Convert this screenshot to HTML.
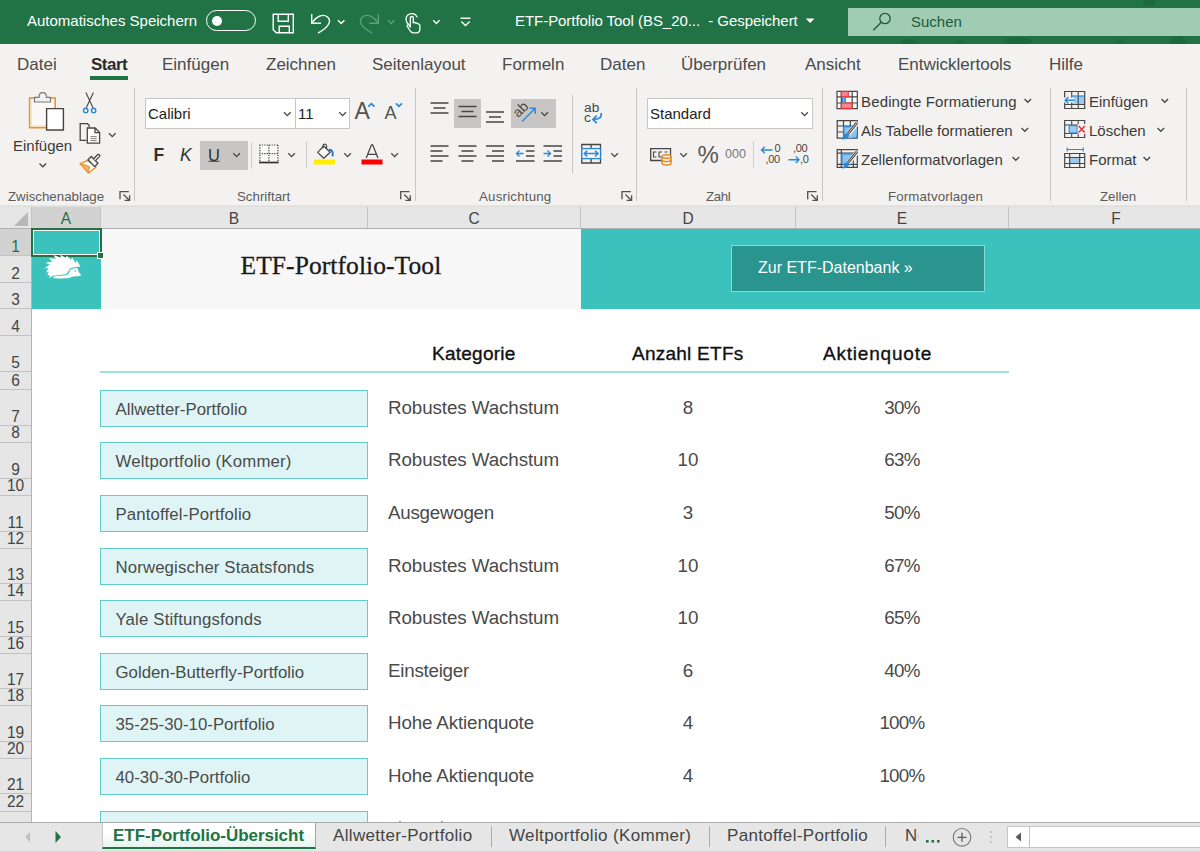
<!DOCTYPE html>
<html><head><meta charset="utf-8">
<style>
*{box-sizing:border-box;margin:0;padding:0}
html,body{width:1200px;height:852px;overflow:hidden;background:#fff;font-family:"Liberation Sans",sans-serif;}
.abs,.abs *{position:absolute}
#root{position:relative;width:1200px;height:852px;overflow:hidden}
#root div,#root span,#root svg{position:absolute;white-space:nowrap}
.t{line-height:1}
/* title bar */
#tb{left:0;top:0;width:1200px;height:44px;background:#217346}
#tb .w{color:#fff;font-size:15px;line-height:20px}
/* ribbon */
#rb{left:0;top:44px;width:1200px;height:162px;background:#f3f2f1}
.tab{font-size:17px;color:#4a4a4a;line-height:20px;top:11px}
.gl{font-size:13.300px;color:#5c5a58;line-height:16px;top:145px}
.sep{width:1px;background:#c8c6c4;top:44px;height:113px}
.rt{font-size:15px;color:#3b3a39;line-height:18px}
.combo{background:#fff;border:1px solid #c8c6c4;height:31px;top:54px}
.hl{background:#c8c6c4}
/* grid */
.ch{top:207px;height:21px;background:#e6e6e6;border-right:1px solid #c4c4c4;font-size:15.500px;color:#444;text-align:center;line-height:23px}
.ch b{font-weight:normal;display:block;position:static!important;transform:scaleY(1.08);transform-origin:50% 70%}
.rh{left:0;width:31px;background:#e6e6e6;border-bottom:1px solid #c4c4c4;font-size:15.500px;color:#444;text-align:center}
.rn{left:0;width:31px;text-align:center;font-size:15.500px;color:#444;line-height:17px;transform:scaleY(1.1);transform-origin:50% 82%}
.rh span{left:0;width:31px;bottom:1px;line-height:17px;text-align:center}
.box{left:100px;width:268px;height:37px;background:#dff5f5;border:1px solid #62cdc8}
.pt{left:115.5px;font-size:16.8px;color:#4a4a4a;line-height:20px;letter-spacing:-0.05px}
.ct{left:388px;font-size:18.8px;color:#4a4a4a;line-height:22px;letter-spacing:-0.12px}
.nt{left:638px;width:100px;text-align:center;font-size:18.8px;color:#4a4a4a;line-height:22px}
.qt{left:852px;width:100px;text-align:center;font-size:18.8px;color:#4a4a4a;line-height:22px;letter-spacing:-.7px}
.hd{font-size:19px;font-weight:normal;color:#111;-webkit-text-stroke:0.35px #111;line-height:22px;top:343px;letter-spacing:0.25px}
/* sheet tabs */
#st{left:0;top:822px;width:1200px;height:30px;background:#e6e6e6;border-top:1px solid #ababab}
.stt{font-size:17px;color:#444;line-height:20px;top:3px}
</style></head><body>
<div id="root">

<!-- TITLE BAR -->
<div id="tb">
  <span class="w" style="left:27px;top:11px">Automatisches Speichern</span>
  <div style="left:206px;top:10px;width:50px;height:21px;border:1px solid #fff;border-radius:11px"></div>
  <div style="left:212px;top:16px;width:10px;height:10px;border-radius:5px;background:#fff"></div>
    <span class="w" style="left:515px;top:11px;letter-spacing:-.05px">ETF-Portfolio Tool (BS_20...&nbsp; - Gespeichert</span>
<svg style="left:0;top:0" width="1200" height="44" viewBox="0 0 1200 44"><g fill="#1d683f">
<circle cx="1149" cy="1" r="6"/><ellipse cx="1018" cy="41" rx="14" ry="4"/><path d="M1114 44 L1120 38.500 L1126 44 Z"/><circle cx="1178" cy="44" r="8.500"/><ellipse cx="909" cy="42" rx="8" ry="3"/><circle cx="960" cy="44" r="3"/></g></svg>
  <div style="left:848px;top:8px;width:352px;height:28px;background:#a0ccb4"></div>
  <span style="left:911px;top:12px;font-size:15px;line-height:20px;color:#1d5a38">Suchen</span>
<!--TBICONS-->
<svg style="left:0;top:0" width="1200" height="44" viewBox="0 0 1200 44" fill="none" stroke="#fff" stroke-width="1.4" stroke-linejoin="miter">
  <!-- save -->
  <path d="M273.2 14.2 H293.3 V32.8 H276.2 L273.2 29.8 Z"/>
  <path d="M278.2 14.2 V21.3 H288.3 V14.2"/>
  <path d="M279.2 32.8 V26.3 H289.3 V32.8"/>
  <!-- undo -->
  <path d="M311.7 14 V23.3 H321" />
  <path d="M312 23 C316 16.5 323 13.2 327.5 17 C332 21 329 27 318 33.2" />
  <path d="M338 20.3 L341.2 23.5 L344.4 20.3" />
  <!-- redo dim -->
  <g stroke="#5c9f78">
  <path d="M378.3 14 V23.3 H369" />
  <path d="M378 23 C374 16.5 367 13.2 362.5 17 C358 21 361 27 372 33.2" />
  <path d="M388 20.3 L391.2 23.5 L394.4 20.3" />
  </g>
  <!-- touch -->
  <g stroke-width="1.3">
  <path d="M408.6 24.3 C405.6 22 405 17.5 407.8 15 C410.6 12.6 415.6 13.3 417.2 17.2" />
  <path d="M410.3 27.5 V18 C410.3 16 413.3 16 413.3 18 V23.5 C413.3 22 415.8 22 415.8 23.8 C415.8 22.6 418 22.7 418 24.5 C418 23.6 419.9 23.8 419.9 25.5 V29 C419.9 31.5 418.5 32.8 416.5 32.8 H413.5 C411.5 32.8 410.5 31.8 409.5 30 L407.3 26.4 C406.6 25 408.6 24 409.5 25.5 Z" />
  </g>
  <path d="M433.2 20.3 L436.4 23.5 L439.6 20.3" />
  <!-- customize -->
  <path d="M460.5 18.2 H470.5" />
  <path d="M461.3 21.5 L465.5 25.5 L469.7 21.5" />
  <!-- title caret -->
  <path d="M805.700 18.500 H814.500 L810.100 23 Z" fill="#fff" stroke="none"/>
  <!-- search -->
  <g stroke="#1d5a38" stroke-width="1.3">
  <circle cx="885" cy="18.5" r="5.2"/>
  <path d="M881.3 22.3 L873.3 30.2"/>
  </g>
</svg>
<!--/TBICONS-->

</div>

<!-- RIBBON -->
<div id="rb">
  <span class="tab" style="left:17px">Datei</span>
  <span class="tab" style="left:91px;font-weight:bold;color:#2b2b2b;letter-spacing:-.5px">Start</span>
  <div style="left:90px;top:32px;width:38px;height:4px;background:#217346"></div>
  <span class="tab" style="left:162px">Einfügen</span>
  <span class="tab" style="left:266px">Zeichnen</span>
  <span class="tab" style="left:372px">Seitenlayout</span>
  <span class="tab" style="left:502px">Formeln</span>
  <span class="tab" style="left:600px">Daten</span>
  <span class="tab" style="left:681px">Überprüfen</span>
  <span class="tab" style="left:805px">Ansicht</span>
  <span class="tab" style="left:898px">Entwicklertools</span>
  <span class="tab" style="left:1049px">Hilfe</span>

  <div class="sep" style="left:134px"></div>
  <div class="sep" style="left:415px"></div>
  <div class="sep" style="left:636px"></div>
  <div class="sep" style="left:822px"></div>
  <div class="sep" style="left:1050px"></div>
  <div class="sep" style="left:1186px"></div>
  <div class="sep" style="left:572px;top:51px;height:78px"></div>

  <span class="gl" style="left:8px">Zwischenablage</span>
  <span class="gl" style="left:237px">Schriftart</span>
  <span class="gl" style="left:479px;letter-spacing:.2px">Ausrichtung</span>
  <span class="gl" style="left:706px;letter-spacing:-.4px">Zahl</span>
  <span class="gl" style="left:888px;letter-spacing:.13px">Formatvorlagen</span>
  <span class="gl" style="left:1100px">Zellen</span>

  <!-- clipboard -->
  <span class="rt" style="left:13px;top:93px">Einfügen</span>
  <!-- font -->
  <div class="combo" style="left:145px;width:151px"></div>
  <div class="combo" style="left:295px;width:55px"></div>
  <span class="rt" style="left:148px;top:61px;color:#222">Calibri</span>
  <span class="rt" style="left:298px;top:61px;color:#222">11</span>
  <div class="hl" style="left:200px;top:96.500px;width:48px;height:29.500px"></div>
  <div class="hl" style="left:454px;top:55px;width:27px;height:29px"></div>
  <div class="hl" style="left:511px;top:55px;width:45px;height:29px"></div>
  <!-- number -->
  <div class="combo" style="left:647px;width:166px"></div>
  <span class="rt" style="left:650px;top:61px;color:#222">Standard</span>
  <!-- styles -->
  <span class="rt" style="left:861px;top:49px;letter-spacing:.15px">Bedingte Formatierung</span>
  <span class="rt" style="left:861px;top:78px;letter-spacing:-.03px">Als Tabelle formatieren</span>
  <span class="rt" style="left:861px;top:107px;letter-spacing:.05px">Zellenformatvorlagen</span>
  <!-- cells -->
  <span class="rt" style="left:1089px;top:49px">Einfügen</span>
  <span class="rt" style="left:1089px;top:78px">Löschen</span>
  <span class="rt" style="left:1089px;top:107px">Format</span>
  <!--RBICONS-->
<svg style="left:0;top:-44px" width="1200" height="206" viewBox="0 0 1200 206" fill="none" stroke="#484644" stroke-width="1.2">
<defs>
  <path id="cv" d="M0 0 L3.3 3.3 L6.6 0" fill="none" stroke="#484644" stroke-width="1.3"/>
  <g id="dl" stroke="#55534f" stroke-width="1.350" fill="none"><path d="M-0.300 9 V1.300 H8.500"/><path d="M3.200 4.200 L9 10 M9.300 5 V10 H4.300"/></g>
</defs>
<!-- ===== clipboard ===== -->
<path d="M29.600 98 H55.200 V127.600 H29.600 Z" fill="#faf9f8" stroke="#e8912d" stroke-width="1.600"/>
<path d="M31.200 99.500 V126 H46" fill="none" stroke="#fbe0b4" stroke-width="1.400"/>
<path d="M34.500 102 V97.300 H39 C39 91 46.500 91 46.500 97.300 H50.500 V102 Z" fill="#f3f2f1" stroke="#7a7876" stroke-width="1.200"/>
<path d="M46.600 108.600 H63.400 V130 H46.600 Z" fill="#fff" stroke="#484644" stroke-width="1.400"/>
<use href="#cv" x="39.500" y="163.500"/>
<!-- scissors -->
<path d="M85.900 92.600 L93 107.800 M93.400 92.600 L86.300 107.800" stroke="#484644" stroke-width="1.100"/>
<circle cx="85.700" cy="110.400" r="2.200" stroke="#2b88d8" stroke-width="1.400"/>
<circle cx="93.600" cy="110.400" r="2.200" stroke="#2b88d8" stroke-width="1.400"/>
<!-- copy -->
<path d="M86.500 140.300 H80.200 V123.700 H87.500 L89.200 125.400 V127.200"  stroke-width="1.300"/>
<path d="M87.300 128 H95.200 L99.600 132.400 V143.200 H87.300 Z M95 128.200 V132.600 H99.400" fill="#fff" stroke-width="1.300"/>
<path d="M90.500 136.600 H96.700 M90.500 138.600 H96.700 M90.500 140.600 H96.700" stroke-width="0.700"/>
<use href="#cv" x="109" y="133.300"/>
<!-- format painter -->
<path d="M80.200 163.600 L87.500 160.500 L96 167 L88.500 173 Z" fill="#fff" stroke="#e8912d" stroke-width="1.400"/>
<path d="M80.200 163.600 L88.500 173 L89.500 166.500 Z" fill="#f5b266" stroke="#e8912d" stroke-width="1"/>
<path d="M88 159.700 L91.300 156.500 L98 163.300 L94.700 166.600 Z" stroke="#484644" stroke-width="1.300" fill="#f3f2f1"/>
<path d="M93.600 158.700 L97.500 154.800 C98.800 153.600 100.600 155.300 99.400 156.600 L95.500 160.600" stroke="#484644" stroke-width="1.300" fill="#f3f2f1"/>
<use href="#dl" x="120.300" y="190.300"/>
<!-- ===== font ===== -->
<use href="#cv" x="284" y="112.3"/>
<use href="#cv" x="339.3" y="112.3"/>
<path d="M368.300 106.700 L371.400 103.600 L374.500 106.700" stroke="#2b88d8" stroke-width="1.700"/>
<path d="M396 103.300 L399 106.300 L402 103.300" stroke="#2b88d8" stroke-width="1.700"/>
<path d="M208.5 161.3 H219.5" stroke-width="1.1"/>
<use href="#cv" x="233.3" y="153.3"/>
<!-- borders -->
<rect x="259.500" y="144.500" width="18.500" height="17" fill="#fafafa" stroke="none"/>
<g stroke="#3b3a39" stroke-width="1.200" stroke-dasharray="1.200 1.270">
<path d="M259.300 145 H278.500 M259.300 153.600 H278.500 M259.900 145 V161.500 M268.900 145 V161.500 M277.900 145 V161.500"/>
</g>
<path d="M259 162.500 H278.700" stroke="#323130" stroke-width="1.700"/>
<path d="M251.500 142 V168.500" stroke="#d2d0ce" stroke-width="1"/>
<use href="#cv" x="288.3" y="153.3"/>
<path d="M306.5 141 V168" stroke="#d2d0ce" stroke-width="1"/>
<!-- fill bucket -->
<path d="M317.700 152.400 L323.700 146 L330.200 152.200 L323.700 158.300 Z" fill="#fafafa" stroke-width="1.250" stroke-linejoin="round"/>
<path d="M323 148.300 V145.800 C323 143.500 326.600 143.500 326.600 146 V148.800" stroke-width="1.100"/>
<path d="M328.800 149.800 C331.800 149.300 333.400 152 332.600 156.300" stroke="#1f72c4" stroke-width="1.900"/>
<rect x="314" y="159.5" width="21" height="5" fill="#ffee00" stroke="none"/>
<use href="#cv" x="344.3" y="153.3"/>
<!-- font color -->
<path d="M366.200 158 L371.500 144.800 H372.700 L378 158 M368 154.300 H376.200" stroke-width="1.300"/>
<rect x="361.5" y="159.5" width="21" height="5" fill="#ff0000" stroke="none"/>
<use href="#cv" x="391.3" y="153.3"/>
<use href="#dl" x="401" y="190.300"/>
<!-- ===== alignment ===== -->
<g stroke-width="1.3">
<path d="M430.5 103 H448.5 M433.5 108 H445.5 M430.5 113 H448.5"/>
<path d="M458.5 106.5 H476.5 M461.5 111.5 H473.5 M458.5 116.5 H476.5"/>
<path d="M486 112 H504 M489 117 H501 M486 122 H504"/>
<path d="M430.5 146 H448.5 M430.5 151 H442.5 M430.5 156 H448.5 M430.5 161 H442.5"/>
<path d="M458.5 146 H476.5 M461.5 151 H473.5 M458.5 156 H476.5 M461.5 161 H473.5"/>
<path d="M486 146 H504 M492 151 H504 M486 156 H504 M492 161 H504"/>
<path d="M516 146 H534.5 M526 151 H534.5 M526 156 H534.5 M516 161 H534.5"/>
<path d="M543.5 146 H562 M553.5 151 H562 M553.5 156 H562 M543.5 161 H562"/>
</g>
<g stroke="#2b88d8" stroke-width="1.4">
<path d="M516.5 153.5 H523.5 M519.5 150.5 L516.5 153.5 L519.5 156.5"/>
<path d="M543.5 153.5 H550.5 M547.5 150.5 L550.5 153.5 L547.5 156.5"/>
<path d="M522 121.5 L535 108.5 M529.5 108.3 H535.2 V114"/>
</g>
<use href="#cv" x="541.3" y="112.3"/>
<!-- wrap arrow -->
<g stroke="#2b88d8" stroke-width="1.700">
<path d="M601.200 113 C601.800 118.200 598.500 119.400 593.300 119.400 M596.700 115.600 L592.900 119.400 L596.700 123.200"/>
</g>
<!-- merge -->
<path d="M581.800 144.500 H600.500 V163 H581.800 Z M591.100 144.500 V148.500 M591.100 158.800 V163" stroke-width="1.300"/>
<rect x="581.800" y="148.600" width="18.700" height="10" fill="#f6f6f6" stroke="#2b88d8" stroke-width="1.300"/>
<g stroke="#2b88d8" stroke-width="1.500"><path d="M584.300 153.600 H598 M587.200 150.700 L584.300 153.600 L587.200 156.500 M595.100 150.700 L598 153.600 L595.100 156.500"/></g>
<use href="#cv" x="611.3" y="153.3"/>
<use href="#dl" x="622.300" y="190.300"/>
<!-- ===== number ===== -->
<use href="#cv" x="801.3" y="112.3"/>
<path d="M650.7 148.7 H670.5 V160.5 H650.7 Z" stroke-width="1.3"/>
<path d="M656.5 152 H653.5 V157 H656.5 M662 152 H659 V157 H662 M664.5 152 H667.5" stroke-width="1.1"/>
<g stroke="#e8821e" stroke-width="1.450" fill="#fdf1e3">
<path d="M662 156.5 V163 C662 165.6 671 165.6 671 163 V156.5"/>
<ellipse cx="666.5" cy="156.5" rx="4.5" ry="1.8"/>
<path d="M662 159.8 C662 162.2 671 162.2 671 159.8" fill="none"/>
</g>
<use href="#cv" x="680.3" y="153.3"/>
<path d="M753.5 141 V168" stroke="#d2d0ce" stroke-width="1"/>
<g stroke="#2b88d8" stroke-width="1.4">
<path d="M761.500 150 H772.500 M764.700 146.800 L761.500 150 L764.700 153.200"/>
<path d="M788.500 159.700 H799 M795.800 156.500 L799 159.700 L795.800 162.900"/>
</g>
<use href="#dl" x="808" y="190.300"/>
<!-- ===== styles ===== -->
<!-- bedingte -->
<rect x="837" y="91.3" width="20.3" height="17.4" fill="#fff" stroke="none"/>
<path d="M837 91.300 H857.300 V108.700 H837 Z M841.300 91.300 V108.700 M852.200 91.300 V108.700 M837 96.800 H857.300 M837 103 H857.300" stroke-width="1.200"/>
<rect x="841.300" y="91.500" width="7" height="5.300" fill="#f8858d" stroke="#e8303b" stroke-width="1.100"/>
<rect x="841.300" y="103" width="10.700" height="5.500" fill="#f8858d" stroke="#e8303b" stroke-width="1.100"/>
<rect x="841.900" y="97.400" width="4" height="5" fill="#2b88d8" stroke="none"/>
<rect x="843" y="97.400" width="1.500" height="5" fill="#7db9ea" stroke="none"/>
<use href="#cv" x="1024.5" y="99"/>
<!-- als tabelle -->
<path d="M837.200 120.700 H857.300 V138.200 H837.200 Z M843.500 120.700 V138.200 M850.300 120.700 V126 M837.200 126 H857.300 M837.200 132 H843.500" stroke-width="1.200"/>
<rect x="843.800" y="126.300" width="13.200" height="11.600" fill="#8cc3ee" stroke="none"/>
<path d="M843.800 137 V126.600 H857" stroke="#2b88d8" stroke-width="1.300"/>
<path d="M852.500 137.900 H857 V132.500" stroke="#2b88d8" stroke-width="1.500" stroke-dasharray="3 1.500"/>
<path d="M857.800 122.300 L848.300 134" stroke="#f3f2f1" stroke-width="4.600"/>
<path d="M857 122.600 L848 133.600" stroke="#484644" stroke-width="2.700"/>
<path d="M857 122.600 L848 133.600" stroke="#f3f2f1" stroke-width="0.800"/>
<path d="M841.500 139.300 C845 140 849.500 138.300 849 134.300 C846.300 132 843.300 134.300 843.700 137 C843.700 138 843 138.800 841.500 139.300 Z" fill="#2b88d8" stroke="none"/>
<use href="#cv" x="1021.5" y="128"/>
<!-- zellenformat -->
<path d="M837.200 149.700 H857.300 V167.300 H837.200 Z M841.300 149.700 V167.300 M837.200 153.200 H857.300 M837.200 164.300 H857.300 M853.300 153.200 V167.300" stroke-width="1.200"/>
<rect x="841.800" y="153.700" width="11" height="10.300" fill="#8cc3ee" stroke="none"/>
<path d="M841.900 164 V153.800 H853" stroke="#2b88d8" stroke-width="1.300"/>
<path d="M857.800 151.300 L848.300 163" stroke="#f3f2f1" stroke-width="4.600"/>
<path d="M857 151.600 L848 162.600" stroke="#484644" stroke-width="2.700"/>
<path d="M857 151.600 L848 162.600" stroke="#f3f2f1" stroke-width="0.800"/>
<path d="M841.500 168.300 C845 169 849.500 167.300 849 163.300 C846.300 161 843.300 163.300 843.700 166 C843.700 167 843 167.800 841.500 168.300 Z" fill="#2b88d8" stroke="none"/>
<use href="#cv" x="1012.5" y="157"/>
<!-- ===== cells ===== -->
<!-- insert -->
<g transform="translate(1.2,0)"><rect x="1071" y="96" width="12.500" height="8.500" fill="#9dcbf0" stroke="none"/></g>
<g transform="translate(1.2,0)"><path d="M1063.500 91.500 H1083.500 V108.500 H1063.500 Z" stroke-width="1.200"/></g>
<g transform="translate(1.2,0)"><path d="M1070.500 91.500 V108.500 M1077 91.500 V108.500 M1063.500 104.500 H1083.500" stroke-width="1.100"/></g>
<g transform="translate(1.2,0)"><path d="M1070.500 96 H1083.500" stroke="#2b88d8" stroke-width="1.200"/></g>
<g transform="translate(1.2,0)"><path d="M1062 100 H1073" stroke="#f3f2f1" stroke-width="5"/></g>
<g transform="translate(1.2,0)"><path d="M1064 100.200 H1073.500 M1067.200 97 L1064 100.200 L1067.200 103.400" stroke="#2b88d8" stroke-width="1.400"/></g>
<use href="#cv" x="1161.500" y="99"/>
<!-- delete -->
<g transform="translate(1.2,0)"><path d="M1063.500 120.500 H1083.500 V137.500 H1063.500 Z" stroke-width="1.200" stroke-dasharray="0"/></g>
<g transform="translate(1.2,0)"><path d="M1070.500 120.500 V137.500 M1077 120.500 V125 M1077 133 V137.500 M1063.500 125 H1083.500 M1063.500 133.500 H1083.500" stroke-width="1.100"/></g>
<g transform="translate(1.2,0)"><rect x="1068" y="125.500" width="8" height="7.500" fill="#9dcbf0" stroke="#2b88d8" stroke-width="1.200"/></g>
<g transform="translate(1.2,0)"><rect x="1076.500" y="124" width="9" height="10" fill="#f3f2f1" stroke="none"/></g>
<g transform="translate(1.2,0)"><path d="M1077.500 126 L1083.500 132.500 M1083.500 126 L1077.500 132.500" stroke="#e8303b" stroke-width="1.500"/></g>
<use href="#cv" x="1157.500" y="128"/>
<!-- format -->
<g transform="translate(1.2,0)"><path d="M1066 149.500 H1082 M1066 147.500 V151.500 M1082 147.500 V151.500" stroke="#2b88d8" stroke-width="1.200"/></g>
<g transform="translate(1.2,0)"><rect x="1068.500" y="157.500" width="10" height="6" fill="#9dcbf0" stroke="none"/></g>
<g transform="translate(1.2,0)"><path d="M1063.500 153.500 H1083.500 V167.500 H1063.500 Z M1068.500 153.500 V167.500 M1078.500 153.500 V167.500 M1063.500 157.500 H1083.500 M1063.500 163.500 H1083.500" stroke-width="1.200"/></g>
<use href="#cv" x="1143.500" y="157"/>
</svg>
<!-- text-based icons -->
<span style="left:354.500px;top:55px;font-size:23px;line-height:24px;color:#55534f">A</span>
<span style="left:384.500px;top:59px;font-size:18px;line-height:20px;color:#55534f">A</span>
<span style="left:153.500px;top:100.500px;font-size:17.500px;letter-spacing:-1px;font-weight:bold;line-height:20px;color:#323130">F</span>
<span style="left:180px;top:100.500px;font-size:17.500px;font-style:italic;line-height:20px;color:#323130">K</span>
<span style="left:208px;top:100.500px;font-size:16.500px;line-height:20px;color:#323130">U</span>
<span style="left:697.500px;top:98px;font-size:24px;line-height:26px;color:#5a5856">%</span>
<span style="left:725px;top:103px;font-size:12.500px;line-height:14px;color:#797775">000</span>
<span style="left:774.500px;top:99px;font-size:11px;line-height:11px;color:#484644">0</span>
<span style="left:765.500px;top:110px;font-size:11px;line-height:11px;color:#484644;letter-spacing:-0.3px">,00</span>
<span style="left:793px;top:99px;font-size:11px;line-height:11px;color:#484644;letter-spacing:-0.3px">,00</span>
<span style="left:800px;top:110px;font-size:11px;line-height:11px;color:#484644;letter-spacing:-0.3px">,0</span>
<span style="left:584px;top:56.500px;font-size:13.700px;line-height:13px;color:#484644;letter-spacing:.2px">ab</span>
<span style="left:584px;top:66.800px;font-size:13.700px;line-height:13px;color:#484644">c</span>
<span style="left:514px;top:60px;font-size:14px;line-height:12px;color:#484644;transform:rotate(-45deg);transform-origin:0 100%;left:519.300px;top:62.800px">ab</span>
<!--/RBICONS-->
</div>
<!-- ribbon bottom shadow -->
<div style="left:0;top:205px;width:1200px;height:2px;background:linear-gradient(#e9e8e7,#dcdcdc)"></div>

<!-- GRID HEADERS -->
<div style="left:0;top:207px;width:1200px;height:22px;background:#e6e6e6;border-bottom:1px solid #b0b0b0"></div>
<div class="ch" style="left:0;width:32px"></div>
<div style="left:14px;top:212px;width:0;height:0;border-left:14px solid transparent;border-bottom:14px solid #b8b8b8"></div>
<div class="ch" style="left:32px;width:69px;background:#d2d2d2;color:#217346"><b>A</b></div>
<div class="ch" style="left:101px;width:267px"><b>B</b></div>
<div class="ch" style="left:368px;width:213px"><b>C</b></div>
<div class="ch" style="left:581px;width:215px"><b>D</b></div>
<div class="ch" style="left:796px;width:213px"><b>E</b></div>
<div class="ch" style="left:1009px;width:215px"><b>F</b></div>

<div style="left:31px;top:229px;width:1px;height:593px;background:#b4b4b4"></div>
<!--ROWHDR-->
<div style="left:0;top:229px;width:31px;height:593px;background:#e6e6e6"></div>
<div style="left:0;top:229px;width:31px;height:27px;background:#d2d2d2"></div>
<div style="left:0;top:255px;width:31px;height:1px;background:#c2c2c2"></div>
<span class="rn" style="top:238px;color:#217346">1</span>
<div style="left:0;top:282px;width:31px;height:1px;background:#c2c2c2"></div>
<span class="rn" style="top:265px">2</span>
<div style="left:0;top:308px;width:31px;height:1px;background:#c2c2c2"></div>
<span class="rn" style="top:291px">3</span>
<div style="left:0;top:335px;width:31px;height:1px;background:#c2c2c2"></div>
<span class="rn" style="top:318px">4</span>
<div style="left:0;top:371px;width:31px;height:1px;background:#c2c2c2"></div>
<span class="rn" style="top:354px">5</span>
<div style="left:0;top:389px;width:31px;height:1px;background:#c2c2c2"></div>
<span class="rn" style="top:372px">6</span>
<div style="left:0;top:425px;width:31px;height:1px;background:#c2c2c2"></div>
<span class="rn" style="top:408px">7</span>
<div style="left:0;top:442px;width:31px;height:1px;background:#c2c2c2"></div>
<span class="rn" style="top:424px">8</span>
<div style="left:0;top:478px;width:31px;height:1px;background:#c2c2c2"></div>
<span class="rn" style="top:461px">9</span>
<div style="left:0;top:495px;width:31px;height:1px;background:#c2c2c2"></div>
<span class="rn" style="top:477px">10</span>
<div style="left:0;top:531px;width:31px;height:1px;background:#c2c2c2"></div>
<span class="rn" style="top:514px">11</span>
<div style="left:0;top:548px;width:31px;height:1px;background:#c2c2c2"></div>
<span class="rn" style="top:530px">12</span>
<div style="left:0;top:583px;width:31px;height:1px;background:#c2c2c2"></div>
<span class="rn" style="top:566px">13</span>
<div style="left:0;top:600px;width:31px;height:1px;background:#c2c2c2"></div>
<span class="rn" style="top:582px">14</span>
<div style="left:0;top:636px;width:31px;height:1px;background:#c2c2c2"></div>
<span class="rn" style="top:619px">15</span>
<div style="left:0;top:653px;width:31px;height:1px;background:#c2c2c2"></div>
<span class="rn" style="top:635px">16</span>
<div style="left:0;top:688px;width:31px;height:1px;background:#c2c2c2"></div>
<span class="rn" style="top:671px">17</span>
<div style="left:0;top:705px;width:31px;height:1px;background:#c2c2c2"></div>
<span class="rn" style="top:687px">18</span>
<div style="left:0;top:741px;width:31px;height:1px;background:#c2c2c2"></div>
<span class="rn" style="top:724px">19</span>
<div style="left:0;top:758px;width:31px;height:1px;background:#c2c2c2"></div>
<span class="rn" style="top:740px">20</span>
<div style="left:0;top:793px;width:31px;height:1px;background:#c2c2c2"></div>
<span class="rn" style="top:776px">21</span>
<div style="left:0;top:811px;width:31px;height:1px;background:#c2c2c2"></div>
<span class="rn" style="top:793px">22</span>
<div style="left:0;top:846px;width:31px;height:1px;background:#c2c2c2"></div>
<span class="rn" style="top:829px">23</span>
<!--/ROWHDR-->

<!-- SHEET -->
<div style="left:32px;top:229px;width:69px;height:80px;background:#3bc2bc"></div>
<div style="left:101px;top:229px;width:480px;height:80px;background:#f7f7f7"></div>
<div style="left:581px;top:229px;width:619px;height:80px;background:#3bc2bc"></div>
<span style="left:240.500px;top:252px;letter-spacing:.08px;font-family:'Liberation Serif',serif;font-size:25.5px;line-height:28px;color:#1a1a1a;-webkit-text-stroke:0.3px #1a1a1a">ETF-Portfolio-Tool</span>
<div style="left:731px;top:245px;width:254px;height:47px;background:#2a948f;border:1px solid #86dad6"></div>
<span style="left:758px;top:258px;font-size:16px;line-height:20px;color:#fff">Zur ETF-Datenbank »</span>
<!-- selection -->
<div style="left:31px;top:228px;width:71px;height:29px;border:2px solid #217346"></div>
<div style="left:33px;top:230px;width:67px;height:25px;border:1px solid #fff"></div>
<div style="left:97px;top:252px;width:6px;height:6px;background:#217346;border:1px solid #fff;box-sizing:content-box;width:5px;height:5px"></div>
<!--HEDGEHOG-->
<svg style="left:36px;top:248px" width="60" height="40" viewBox="0 0 1200 800">
<path fill="#fff" d="M890 372 L815 250 L795 300 L720 190 L700 238 L612 150 L600 200 L490 135 L500 195 L350 140 L400 215 L255 205 L330 270 L190 295 L275 328 L165 410 L250 400 L195 495 L255 470 L225 560 L275 535 L270 605 L315 565 C340 545 520 540 590 525 C635 515 640 470 665 430 C690 395 780 385 890 372 Z"/>
<path fill="#fff" d="M690 432 C720 410 790 405 830 400 C835 440 850 480 905 545 C880 565 840 560 800 565 C740 570 700 580 660 602 C560 615 420 612 345 600 C325 595 335 580 360 570 C450 555 560 560 620 542 C665 525 665 465 690 432 Z"/>
<ellipse cx="787" cy="462" rx="11" ry="20" fill="#3bc2bc"/>
</svg>
<!--/HEDGEHOG-->

<span class="hd" style="left:432px">Kategorie</span>
<span class="hd" style="left:632px">Anzahl ETFs</span>
<span class="hd" style="left:823px;letter-spacing:.8px">Aktienquote</span>
<div style="left:100px;top:371px;width:909px;height:2px;background:#9fe0dd"></div>

<!--ROWS-->
<div class="box" style="top:390px"></div>
<span class="pt" style="top:400px;letter-spacing:0.0px">Allwetter-Portfolio</span>
<span class="ct" style="top:397px;letter-spacing:-0.093px">Robustes Wachstum</span>
<span class="nt" style="top:397px">8</span>
<span class="qt" style="top:397px">30%</span>
<div class="box" style="top:442px"></div>
<span class="pt" style="top:452px;letter-spacing:0.176px">Weltportfolio (Kommer)</span>
<span class="ct" style="top:449px;letter-spacing:-0.093px">Robustes Wachstum</span>
<span class="nt" style="top:449px">10</span>
<span class="qt" style="top:449px">63%</span>
<div class="box" style="top:495px"></div>
<span class="pt" style="top:505px;letter-spacing:0.142px">Pantoffel-Portfolio</span>
<span class="ct" style="top:502px;letter-spacing:-0.261px">Ausgewogen</span>
<span class="nt" style="top:502px">3</span>
<span class="qt" style="top:502px">50%</span>
<div class="box" style="top:548px"></div>
<span class="pt" style="top:558px;letter-spacing:0.121px">Norwegischer Staatsfonds</span>
<span class="ct" style="top:555px;letter-spacing:-0.093px">Robustes Wachstum</span>
<span class="nt" style="top:555px">10</span>
<span class="qt" style="top:555px">67%</span>
<div class="box" style="top:600px"></div>
<span class="pt" style="top:610px;letter-spacing:0.16px">Yale Stiftungsfonds</span>
<span class="ct" style="top:607px;letter-spacing:-0.093px">Robustes Wachstum</span>
<span class="nt" style="top:607px">10</span>
<span class="qt" style="top:607px">65%</span>
<div class="box" style="top:653px"></div>
<span class="pt" style="top:663px;letter-spacing:0.011px">Golden-Butterfly-Portfolio</span>
<span class="ct" style="top:660px;letter-spacing:-0.253px">Einsteiger</span>
<span class="nt" style="top:660px">6</span>
<span class="qt" style="top:660px">40%</span>
<div class="box" style="top:705px"></div>
<span class="pt" style="top:715px;letter-spacing:0.03px">35-25-30-10-Portfolio</span>
<span class="ct" style="top:712px;letter-spacing:-0.143px">Hohe Aktienquote</span>
<span class="nt" style="top:712px">4</span>
<span class="qt" style="top:712px">100%</span>
<div class="box" style="top:758px"></div>
<span class="pt" style="top:768px;letter-spacing:0.037px">40-30-30-Portfolio</span>
<span class="ct" style="top:765px;letter-spacing:-0.143px">Hohe Aktienquote</span>
<span class="nt" style="top:765px">4</span>
<span class="qt" style="top:765px">100%</span>
<div class="box" style="top:811px"></div>
<!--/ROWS-->

<!-- SHEET TABS -->
<div id="st">
  <div style="left:102px;top:0;width:214px;height:26px;background:linear-gradient(#fff 40%,#e6f4ee);border-bottom:2px solid #217346;border-right:1px solid #a6a6a6;border-left:1px solid #c6c6c6"></div>
  <span class="stt" style="left:113px;font-weight:bold;color:#217346;letter-spacing:-.03px">ETF-Portfolio-Übersicht</span>
  <span class="stt" style="left:333px;letter-spacing:.33px">Allwetter-Portfolio</span>
  <span class="stt" style="left:509px;letter-spacing:.36px">Weltportfolio (Kommer)</span>
  <span class="stt" style="left:727px;letter-spacing:.33px">Pantoffel-Portfolio</span>
  <div style="left:491px;top:3px;width:1px;height:21px;background:#ababab"></div>
  <div style="left:709px;top:3px;width:1px;height:21px;background:#ababab"></div>
  <div style="left:885px;top:3px;width:1px;height:21px;background:#ababab"></div>
  <div style="left:905px;top:3px;width:15px;height:22px;overflow:hidden"><span class="stt" style="left:0;top:0">No</span></div>
  <div style="left:915px;top:3px;width:6px;height:22px;background:linear-gradient(90deg,rgba(230,230,230,0),#e6e6e6 70%)"></div>
  <svg style="left:0;top:0" width="1200" height="30" viewBox="0 822 1200 30">
    <path d="M30 830.500 V841.500 L25.500 836 Z" fill="#c0c0c0"/>
    <path d="M55.500 830 V842 L61 836 Z" fill="#217346"/>
    <rect x="926" y="839" width="2.600" height="2.600" fill="#217346"/><rect x="931.500" y="839" width="2.600" height="2.600" fill="#217346"/><rect x="937" y="839" width="2.600" height="2.600" fill="#217346"/>
    <circle cx="962" cy="836.300" r="8.800" fill="none" stroke="#7a7a7a" stroke-width="1.100"/>
    <path d="M957.500 836.300 H966.500 M962 831.800 V840.800" stroke="#5a5a5a" stroke-width="1.300"/>
    <rect x="990.200" y="830" width="1.800" height="1.800" fill="#bdbdbd"/><rect x="990.200" y="835" width="1.800" height="1.800" fill="#bdbdbd"/><rect x="990.200" y="840" width="1.800" height="1.800" fill="#bdbdbd"/>
    <rect x="1007.500" y="825.500" width="200" height="21" fill="#fff" stroke="#c6c6c6"/>
    <path d="M1029.500 825.500 V846.500" stroke="#c6c6c6"/>
    <path d="M1021 831.500 V840.500 L1015.500 836 Z" fill="#5a5a5a"/>
  </svg>
  <div style="left:0;top:27.500px;width:1200px;height:2px;background:#d8d8d8"></div>
</div>
<div style="left:399px;top:820.500px;width:2px;height:1.500px;background:#9a9a9a"></div>
<div style="left:441px;top:820.500px;width:2px;height:1.500px;background:#9a9a9a"></div>

</div>
</body></html>
